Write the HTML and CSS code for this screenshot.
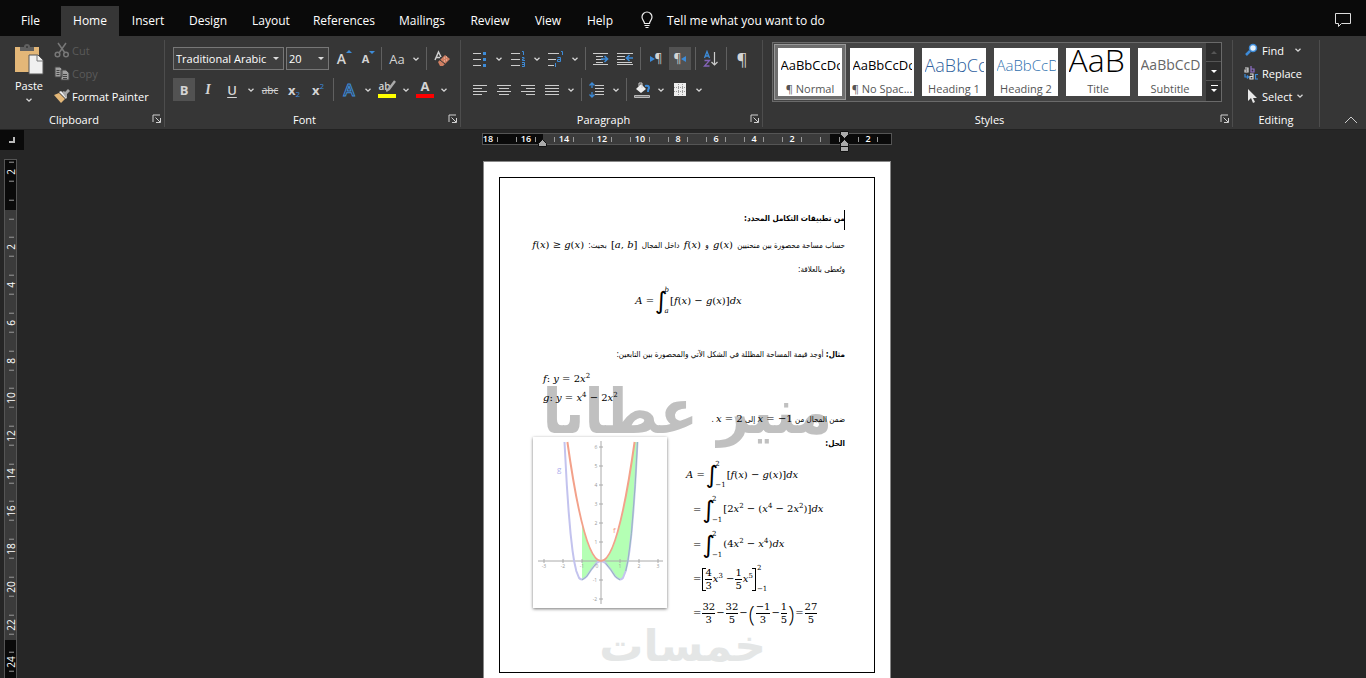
FILE: index.html
```html
<!DOCTYPE html>
<html lang="en">
<head>
  <meta charset="UTF-8" />
  <title>Document</title>
  <link rel="stylesheet" href="styles.css">
</head>
<body>
  <svg class="defs" aria-hidden="true">
    <symbol id="chev" viewBox="0 0 8 8"><path d="M1.5 2.8L4 5.2L6.5 2.8" fill="none" stroke="#d8d8d8" stroke-width="1.3"/></symbol>
    <symbol id="launch" viewBox="0 0 10 10"><path d="M1 8V1H8M3.5 3.5L8 8M8.5 4V8.5H4" fill="none" stroke="#d0d0d0"/></symbol>
  </svg>

  <div class="app">
    <nav class="tabs">
      <button>File</button>
      <button class="active">Home</button>
      <button>Insert</button>
      <button>Design</button>
      <button>Layout</button>
      <button>References</button>
      <button>Mailings</button>
      <button>Review</button>
      <button>View</button>
      <button>Help</button>
      <button class="tell">
        <svg width="14" height="18" viewBox="0 0 14 18"><path d="M4.5 12.5C4.5 10 2 9 2 6a5 5 0 0 1 10 0c0 3-2.500 4-2.500 6.500zM4.500 14.500h5M5.500 16.500h3" fill="none" stroke="#eee" stroke-width="1.200"/></svg>
        Tell me what you want to do
      </button>
      <button class="comment" aria-label="Comments">
        <svg width="18" height="16" viewBox="0 0 18 16"><path d="M1.500 1.500h15v10h-9l-3 3v-3h-3z" fill="none" stroke="#ddd"/></svg>
      </button>
    </nav>

    <header class="ribbon">
      <section class="group">
        <div class="body clipboard">
          <button class="paste">
            <svg width="30" height="32" viewBox="0 0 30 32">
              <path d="M1 4h24v25H1z" fill="#e3b778"/>
              <path d="M6 8V4h4a3 3 0 0 1 6 0h4v4z" fill="#606060"/><circle cx="13" cy="4" r="1" fill="#363636"/>
              <path d="M15 12h9l5 5v14H15z" fill="#f0f0f0" stroke="#555"/><path d="M23 12v6h6" fill="none" stroke="#777"/>
            </svg>
            Paste
            <svg width="8" height="8"><use href="#chev"/></svg>
          </button>
          <div class="stack">
            <button class="off">
              <svg width="16" height="16" viewBox="0 0 16 16"><g fill="none" stroke="#777" stroke-width="1.500"><path d="M4 1l7 10M12 1L5 11"/><circle cx="3.500" cy="12.500" r="2.300"/><circle cx="12" cy="12.500" r="2.300"/></g></svg>
              Cut
            </button>
            <button class="off">
              <svg width="16" height="16" viewBox="0 0 16 16"><path d="M1 2h5l2 2v8H1zM7 5h5l3 3v7H7z" fill="#a0a0a0" stroke="#444"/><path d="M2.500 5.500h3M2.500 7.500h3M2.500 9.500h3M9 9.500h4M9 11.500h4M9 13.500h4" stroke="#444"/></svg>
              Copy
            </button>
            <button>
              <svg width="16" height="16" viewBox="0 0 16 16"><path d="M0 7l5-2 6 6-4 4z" fill="#e3b778"/><path d="M5 4l2-1 6 6-1 2z" fill="#eee"/><path d="M8 4l2-1 1 1 3-3 2 2-3 3v3l-1 1z" fill="#a8a8a8"/></svg>
              Format Painter
            </button>
          </div>
        </div>
        <footer><span>Clipboard</span><button aria-label="Clipboard options"><svg width="10" height="10"><use href="#launch"/></svg></button></footer>
      </section>

      <section class="group">
        <div class="body">
          <div class="row">
            <span class="combo font-name"><select aria-label="Font"><option>Traditional Arabic</option></select></span>
            <span class="combo font-size"><select aria-label="Font size"><option>20</option></select></span>
            <button class="btn grow"><b class="big">A</b><i class="tri up"></i></button>
            <button class="btn grow"><b class="small">A</b><i class="tri down"></i></button>
            <span class="sep"></span>
            <button class="btn case">Aa</button>
            <button class="chev" aria-label="Case options"><svg width="8" height="8"><use href="#chev"/></svg></button>
            <span class="sep"></span>
            <button class="btn" aria-label="Clear formatting">
              <svg width="18" height="18" viewBox="0 0 18 18"><path d="M2 10L5.500 2L8 7M3 7.500h4" fill="none" stroke="#d0d0d0" stroke-width="1.500"/><path d="M5 12l7-7 5 4-7 7-3 0z" fill="#d07f62"/><path d="M7 10l5 4" stroke="#363636"/><path d="M11 8h1M13 7h1M13 10h1M11 11h1" stroke="#f5cdbd"/></svg>
            </button>
          </div>
          <div class="row">
            <button class="btn on"><b>B</b></button>
            <button class="btn italic">I</button>
            <button class="btn underline">U</button>
            <button class="chev" aria-label="Underline options"><svg width="8" height="8"><use href="#chev"/></svg></button>
            <button class="btn strike">abc</button>
            <button class="btn script"><b>x</b><sub>2</sub></button>
            <button class="btn script"><b>x</b><sup>2</sup></button>
            <span class="sep"></span>
            <button class="btn effects">A</button>
            <button class="chev" aria-label="Text effects"><svg width="8" height="8"><use href="#chev"/></svg></button>
            <button class="btn bar yellow"><span>ab</span><svg width="10" height="12" viewBox="0 0 10 12"><path d="M9 1L3 9L0 11" fill="none" stroke="#aaa" stroke-width="2.400"/></svg></button>
            <button class="chev" aria-label="Highlight colours"><svg width="8" height="8"><use href="#chev"/></svg></button>
            <button class="btn bar red"><b>A</b></button>
            <button class="chev" aria-label="Font colours"><svg width="8" height="8"><use href="#chev"/></svg></button>
          </div>
        </div>
        <footer><span>Font</span><button aria-label="Font options"><svg width="10" height="10"><use href="#launch"/></svg></button></footer>
      </section>

      <section class="group">
        <div class="body">
          <div class="row">
            <button class="btn" aria-label="Bullets"><svg width="16" height="16" viewBox="0 0 16 16"><path d="M1 2.500h8M1 8.500h8M1 14.500h8" stroke="#ccc"/><path d="M11 1h3v3h-3zM11 7h3v3h-3zM11 13h3v3h-3z" fill="#3d8bd8"/></svg></button>
            <button class="chev" aria-label="Bullet library"><svg width="8" height="8"><use href="#chev"/></svg></button>
            <button class="btn" aria-label="Numbering"><svg width="16" height="16" viewBox="0 0 16 16"><path d="M1 2.500h9M1 8.500h9M1 14.500h9" stroke="#ccc"/><path d="M12 .500h1.500V4M12 6.500h2v1.500h-1.500v1.500H15M12 11.500h2.500v4H12M12 13.500h2" fill="none" stroke="#3d8bd8"/></svg></button>
            <button class="chev" aria-label="Number library"><svg width="8" height="8"><use href="#chev"/></svg></button>
            <button class="btn" aria-label="Multilevel list"><svg width="18" height="16" viewBox="0 0 18 16"><path d="M1 2.500h11M1 8.500h8M1 14.500h6" stroke="#ccc"/><path d="M14 .500h1.500V4M10.500 6.500h3v4h-3v-2h3M8.500 12v4" fill="none" stroke="#3d8bd8"/></svg></button>
            <button class="chev" aria-label="List library"><svg width="8" height="8"><use href="#chev"/></svg></button>
            <span class="sep"></span>
            <button class="btn" aria-label="Increase indent"><svg width="16" height="14" viewBox="0 0 16 14"><path d="M0 1.500h15M3 4.500h7M3 7.500h7M3 10.500h7M0 12.500h15" stroke="#ccc"/><path d="M8 7h6M11.500 4l3 3-3 3" fill="none" stroke="#3d8bd8" stroke-width="1.600"/></svg></button>
            <button class="btn" aria-label="Decrease indent"><svg width="16" height="14" viewBox="0 0 16 14"><path d="M0 1.500h16M0 4.500h8M0 7.500h8M0 10.500h15M0 12.500h16" stroke="#ccc"/><path d="M10 6h6M12.500 3l-3 3 3 3" fill="none" stroke="#3d8bd8" stroke-width="1.600"/></svg></button>
            <span class="sep"></span>
            <button class="btn pil"><i class="tri right"></i>¶</button>
            <button class="btn pil on">¶<i class="tri left"></i></button>
            <span class="sep"></span>
            <button class="btn" aria-label="Sort"><svg width="16" height="18" viewBox="0 0 16 18"><path d="M1.500 8L4 1.500L6.500 8M2.500 6h3" fill="none" stroke="#3d8bd8" stroke-width="1.300"/><path d="M1.500 10.500h5L1.500 16h5" fill="none" stroke="#8464b8" stroke-width="1.300"/><path d="M11.500 2v13M8.500 12l3 3 3-3" fill="none" stroke="#ccc" stroke-width="1.200"/></svg></button>
            <span class="sep"></span>
            <button class="btn mark">¶</button>
          </div>
          <div class="row">
            <button class="btn" aria-label="Align left"><svg width="14" height="12" viewBox="0 0 14 12"><path d="M0 1.500h14M0 4.500h9M0 7.500h14M0 10.500h9" stroke="#ccc"/></svg></button>
            <button class="btn" aria-label="Center"><svg width="14" height="12" viewBox="0 0 14 12"><path d="M0 1.500h14M2 4.500h10M0 7.500h14M2 10.500h10" stroke="#ccc"/></svg></button>
            <button class="btn" aria-label="Align right"><svg width="14" height="12" viewBox="0 0 14 12"><path d="M0 1.500h14M5 4.500h9M0 7.500h14M5 10.500h9" stroke="#ccc"/></svg></button>
            <button class="btn" aria-label="Justify"><svg width="14" height="12" viewBox="0 0 14 12"><path d="M0 1.500h14M0 4.500h14M0 7.500h14M0 10.500h14" stroke="#ccc"/></svg></button>
            <button class="chev" aria-label="Justify options"><svg width="8" height="8"><use href="#chev"/></svg></button>
            <span class="sep"></span>
            <button class="btn" aria-label="Line spacing"><svg width="16" height="16" viewBox="0 0 16 16"><path d="M6 3.500h9M6 6.500h9M6 9.500h9M6 12.500h9" stroke="#ccc"/><path d="M3 1v5M.500 3.500L3 1l2.500 2.500M3 10v5M.500 12.500L3 15l2.500-2.500" fill="none" stroke="#3d8bd8" stroke-width="1.300"/></svg></button>
            <button class="chev" aria-label="Spacing options"><svg width="8" height="8"><use href="#chev"/></svg></button>
            <span class="sep"></span>
            <button class="btn" aria-label="Shading"><svg width="18" height="18" viewBox="0 0 18 18"><path d="M3 8l5-5 5 5-5 4z" fill="#eee"/><path d="M6 5V2h3v5" fill="none" stroke="#ccc"/><path d="M12 5q4-1 4 2-1 1-1 4" fill="none" stroke="#3d8bd8" stroke-width="2"/><path d="M1.500 14.500h15v2h-15z" fill="#777" stroke="#bbb"/></svg></button>
            <button class="chev" aria-label="Shading colours"><svg width="8" height="8"><use href="#chev"/></svg></button>
            <button class="btn" aria-label="Borders"><svg width="14" height="14" viewBox="0 0 14 14"><path d="M1 0h12v13H1z" fill="#eee"/><path d="M1 4.500h12M1 8.500h12M5.500 1v11M9.500 1v11" stroke="#999" stroke-dasharray="1 1"/></svg></button>
            <button class="chev" aria-label="Border options"><svg width="8" height="8"><use href="#chev"/></svg></button>
          </div>
        </div>
        <footer><span>Paragraph</span><button aria-label="Paragraph options"><svg width="10" height="10"><use href="#launch"/></svg></button></footer>
      </section>

      <section class="group">
        <div class="body">
          <div class="gallery">
            <button class="style selected"><span class="sample">AaBbCcDc</span><span>¶ Normal</span></button>
            <button class="style"><span class="sample">AaBbCcDc</span><span>¶ No Spac...</span></button>
            <button class="style"><span class="sample h1">AaBbCc</span><span>Heading 1</span></button>
            <button class="style"><span class="sample h2">AaBbCcD</span><span>Heading 2</span></button>
            <button class="style"><span class="sample title">AaB</span><span>Title</span></button>
            <button class="style"><span class="sample subtitle">AaBbCcD</span><span>Subtitle</span></button>
            <div class="scroll">
              <button aria-label="Previous styles"><i class="tri up dim"></i></button>
              <button aria-label="Next styles"><i class="tri down white"></i></button>
              <button class="more" aria-label="All styles"><i class="tri down white"></i></button>
            </div>
          </div>
        </div>
        <footer><span>Styles</span><button aria-label="Style options"><svg width="10" height="10"><use href="#launch"/></svg></button></footer>
      </section>

      <section class="group">
        <div class="body stack editing">
          <button>
            <svg width="14" height="14" viewBox="0 0 14 14"><circle cx="9" cy="5" r="3.500" fill="#e8f2fb" stroke="#3d8bd8" stroke-width="1.500"/><path d="M6 8l-4 4" stroke="#3d8bd8" stroke-width="2.500"/></svg>
            Find <svg class="far" width="8" height="8"><use href="#chev"/></svg>
          </button>
          <button>
            <svg width="14" height="14" viewBox="0 0 14 14"><g fill="none" stroke-width="1.200"><path d="M1 2h3v4H1V4h3" stroke="#ddd"/><path d="M7 0v6h3V3H7" stroke="#9070c8"/><path d="M1 8v3h3M3 9.500L4.500 11 3 12.500" stroke="#3d8bd8"/><path d="M6 8h3v5H6v-2.500h3" stroke="#ddd"/><path d="M14 8.500h-2.500V13H14" stroke="#3d8bd8"/></g></svg>
            Replace
          </button>
          <button>
            <svg width="14" height="14" viewBox="0 0 14 14"><path d="M4 0v12l3-3 2 5 2-1-2-4h4z" fill="#e8e8e8"/></svg>
            Select <svg width="8" height="8"><use href="#chev"/></svg>
          </button>
        </div>
        <footer><span>Editing</span></footer>
      </section>

      <button class="collapse" aria-label="Collapse the ribbon"><svg width="14" height="8" viewBox="0 0 14 8"><path d="M1 7l6-6 6 6" fill="none" stroke="#ccc"/></svg></button>
    </header>

    <main class="workspace">
      <aside>
        <button class="tabstop" aria-label="Tab stop"><svg width="6" height="6" viewBox="0 0 6 6"><path d="M0 5h6M5 0v6" stroke="#bbb" stroke-width="2"/></svg></button>
        <div class="vruler">
          <ol>
            <li>2</li><li></li><li>2</li><li>4</li><li>6</li><li>8</li><li>10</li><li>12</li><li>14</li><li>16</li><li>18</li><li>20</li><li>22</li><li>24</li>
          </ol>
        </div>
      </aside>

      <div class="canvas">
        <div class="hruler">
          <ol>
            <li>18</li><li>16</li><li>14</li><li>12</li><li>10</li><li>8</li><li>6</li><li>4</li><li>2</li><li></li><li>2</li>
          </ol>
          <svg class="indent left" width="9" height="8" viewBox="0 0 9 8"><path d="M.500 7.500v-3l4-4 4 4v3z" fill="#aaa" stroke="#111"/></svg>
          <svg class="indent right" width="9" height="22" viewBox="0 0 9 22"><path d="M.500.500h8v3l-4 4-4-4zM.500 15.500v-3l4-4 4 4v3zM.500 15.500h8v5h-8z" fill="#aaa" stroke="#111"/></svg>
        </div>

        <article class="page">
          <div class="frame">
            <div class="name-mark" lang="ar" dir="rtl">منير عطايا</div>

            <div class="text" lang="ar" dir="rtl">
              <h1><span class="cursor"></span>من تطبيقات التكامل المحدد:</h1>
              <p class="intro">حساب مساحة محصورة بين منحنيين <bdi class="m" dir="ltr"><i>g</i>(<i>x</i>)</bdi> و <bdi class="m" dir="ltr"><i>f</i>(<i>x</i>)</bdi> داخل المجال <bdi class="m" dir="ltr">[<i>a</i>, <i>b</i>]</bdi> بحيث: <bdi class="m" dir="ltr"><i>f</i>(<i>x</i>) ≥ <i>g</i>(<i>x</i>)</bdi></p>
              <p>وتُعطى بالعلاقة:</p>
              <div class="m eq center" dir="ltr"><span><i>A</i> =</span><span class="int">∫</span><span class="lim"><i>b</i><i>a</i></span><span>[<i>f</i>(<i>x</i>) − <i>g</i>(<i>x</i>)]<i>dx</i></span></div>
              <p class="example"><b>مثال:</b> أوجد قيمة المساحة المظللة في الشكل الآتي والمحصورة بين التابعين:</p>
              <div class="m func" dir="ltr"><i>f</i>: <i>y</i> = 2<i>x</i><sup>2</sup></div>
              <div class="m func" dir="ltr"><i>g</i>: <i>y</i> = <i>x</i><sup>4</sup> − 2<i>x</i><sup>2</sup></div>
              <p class="range">ضمن المجال من <bdi class="m" dir="ltr"><i>x</i> = −1</bdi> إلى <bdi class="m" dir="ltr"><i>x</i> = 2</bdi> .</p>
            </div>

            <div class="solution">
              <figure>
                <svg viewBox="0 0 134 171" role="img" aria-label="Area between f and g">
                  <path d="M49 86Q58.500 124 68 124Q84.800 124 101.600 5H104.500L102.200 47.700 100.300 75.100 98.400 96.800 96.500 113.300 94.900 124 92.700 134 89.900 141 87 143 82.200 139.400 77.500 132.300 72.700 126.300 68 124 63.300 126.300 58.500 132.300 53.700 139.400 49 143z" fill="#b4ffb4"/>
                  <path d="M5 124H130M68 4V167" stroke="#aaa"/>
                  <path d="M11 122v4M30 122v4M49 122v4M87 122v4M106 122v4M125 122v4M66 10h4M66 29h4M66 48h4M66 67h4M66 86h4M66 105h4M66 143h4M66 162h4" stroke="#aaa"/>
                  <path d="M31.500 5L33.800 47.700 35.700 75.100 37.600 96.800 39.500 113.300 41.100 124 43.300 134 46.100 141Q49 144.500 53.700 139.400L58.500 132.300 63.300 126.300Q68 122 72.700 126.300L77.500 132.300 82.200 139.400Q87 144.500 89.900 141L92.700 134 94.900 124 96.500 113.300 98.400 96.800 100.300 75.100 102.200 47.700 104.500 5" fill="none" stroke="#c3c3ee" stroke-width="2"/>
                  <path d="M49 143L53.700 139.400 58.500 132.300 63.300 126.300M87 143L82.200 139.400 77.500 132.300 72.700 126.300M92.700 134L94.900 124 98.400 96.800 102.200 47.700 104.500 5" fill="none" stroke="#94b8bc"/>
                  <path d="M34.400 5Q68 243 101.600 5" fill="none" stroke="#f3a18a" stroke-width="2"/>
                  <g class="axis">
                    <text x="11" y="131">-3</text><text x="30" y="131">-2</text><text x="49" y="131">-1</text><text x="64" y="131">0</text><text x="87" y="131">1</text><text x="106" y="131">2</text><text x="125" y="131">3</text>
                    <text x="63" y="12">6</text><text x="63" y="31">5</text><text x="63" y="50">4</text><text x="63" y="69">3</text><text x="63" y="88">2</text><text x="63" y="107">1</text><text x="62" y="145">-1</text><text x="62" y="164">-2</text>
                  </g>
                  <text class="gname" x="24" y="35">g</text><text class="fname" x="80" y="96">f</text>
                </svg>
              </figure>
              <div class="steps">
                <p class="text" lang="ar" dir="rtl"><b>الحل:</b></p>
                <div class="m eq first"><span><i>A</i> =</span><span class="int">∫</span><span class="lim"><span>2</span><span>−1</span></span><span>[<i>f</i>(<i>x</i>) − <i>g</i>(<i>x</i>)]<i>dx</i></span></div>
                <div class="m eq"><span>=</span><span class="int">∫</span><span class="lim"><span>2</span><span>−1</span></span><span>[2<i>x</i><sup>2</sup> − (<i>x</i><sup>4</sup> − 2<i>x</i><sup>2</sup>)]<i>dx</i></span></div>
                <div class="m eq"><span>=</span><span class="int">∫</span><span class="lim"><span>2</span><span>−1</span></span><span>(4<i>x</i><sup>2</sup> − <i>x</i><sup>4</sup>)<i>dx</i></span></div>
                <div class="m eq fractions"><span>=</span><span class="bracket"><span class="frac"><span>4</span><span>3</span></span><span><i>x</i><sup>3</sup> −</span><span class="frac"><span>1</span><span>5</span></span><span><i>x</i><sup>5</sup></span></span><span class="lim tight"><span>2</span><span>−1</span></span></div>
                <div class="m eq fractions"><span>=</span><span class="frac"><span>32</span><span>3</span></span><span>−</span><span class="frac"><span>32</span><span>5</span></span><span>−</span><span class="paren">(</span><span class="frac"><span>−1</span><span>3</span></span><span>−</span><span class="frac"><span>1</span><span>5</span></span><span class="paren">)</span><span>=</span><span class="frac"><span>27</span><span>5</span></span></div>
              </div>
            </div>

            <div class="site-mark" lang="ar" dir="rtl">خمسات</div>
          </div>
        </article>
      </div>
    </main>
  </div>
</body>
</html>
```
FILE: styles.css
```css
* {
  box-sizing: border-box;
}
body {
  margin: 0;
  background: #262626;
  color: #fff;
  font: 11px "Open Sans", "Noto Sans", sans-serif;
}
button {
  display: flex;
  align-items: center;
  justify-content: center;
  padding: 0;
  border: 0;
  background: none;
  color: inherit;
  font: inherit;
  white-space: nowrap;
}
svg {
  flex: none;
}
ol {
  list-style: none;
  margin: 0;
  padding: 0;
}
p, h1, figure {
  margin: 0;
}
.defs {
  position: absolute;
  width: 0;
  height: 0;
}
.app {
  display: flex;
  flex-direction: column;
  height: 100vh;
  overflow: hidden;
}

/* tabs */
.tabs {
  display: grid;
  grid-template-columns: 61px 58px 58px 62px 64px 82px 74px 62px 54px 50px 1fr 46px;
  flex: none;
  height: 36px;
  padding-top: 6px;
  background: #0a0a0a;
  font-size: 12px;
}
.tabs button {
  padding-bottom: 2px;
}
.tabs .active {
  background: #363636;
}
.tabs .tell {
  justify-content: flex-start;
  gap: 13px;
  padding-left: 15px;
}

/* ribbon */
.ribbon {
  display: grid;
  grid-template-columns: 165px 296px 302px 470px 87px 1fr;
  flex: none;
  height: 94px;
  padding: 4px 0 2px;
  background: #363636;
  border-bottom: 1px solid #222;
}
.group {
  display: flex;
  flex-direction: column;
  border-right: 1px solid #4d4d4d;
}
.body {
  flex: 1;
  padding: 7px 0 0 8px;
}
.group footer {
  display: flex;
  align-items: center;
  height: 16px;
}
.group footer span {
  flex: 1;
  text-align: center;
}
.group footer button {
  width: 16px;
  padding-right: 2px;
  justify-content: flex-end;
}
.clipboard {
  display: flex;
  gap: 5px;
  padding: 0 0 0 9px;
}
.paste {
  flex-direction: column;
  justify-content: flex-start;
  gap: 3px;
  width: 40px;
  padding-top: 3px;
}
.stack {
  display: flex;
  flex-direction: column;
  gap: 7px;
  padding-top: 2px;
}
.stack button {
  justify-content: flex-start;
  gap: 2px;
  height: 16px;
}
.stack .off {
  color: #5a5a5a;
}
.editing {
  padding-left: 11px;
}
.editing button {
  gap: 4px;
}
.editing .far {
  margin-left: 6px;
}
.row {
  display: flex;
  gap: 2px;
  height: 23px;
  margin-bottom: 8px;
}
.combo {
  position: relative;
}
.combo::after {
  content: "";
  position: absolute;
  right: 5px;
  top: 10px;
  border: 3px solid transparent;
  border-top-color: #ddd;
}
.combo select {
  appearance: none;
  width: 100%;
  height: 23px;
  padding: 0 2px;
  border: 1px solid #777;
  border-radius: 0;
  background: #3f3f3f;
  color: #fff;
  font: inherit;
}
.font-name {
  width: 111px;
}
.font-size {
  width: 43px;
}
.btn {
  width: 22px;
  height: 23px;
  color: #d4d4d4;
  font-size: 13px;
}
.btn.on {
  background: #525252;
}
.chev {
  width: 12px;
}
.sep {
  width: 5px;
  border-left: 1px solid #606060;
  margin-left: 2px;
  margin-right: -2px;
}
.grow {
  padding-left: 5px;
}
.big {
  font-size: 14px;
  font-weight: 600;
}
.small {
  font-size: 11px;
}
.tri {
  border: 3px solid transparent;
}
.tri.up {
  align-self: flex-start;
  border-bottom-color: #3d8bd8;
}
.tri.down {
  align-self: flex-start;
  margin-top: 4px;
  border-top-color: #3d8bd8;
}
.tri.right {
  border-left-color: #3d8bd8;
  border-left-width: 5px;
  border-right: 0;
}
.tri.left {
  border-right-color: #3d8bd8;
  border-right-width: 5px;
  border-left: 0;
}
.italic {
  font: italic bold 14px "Liberation Serif", serif;
}
.underline {
  font-weight: 600;
  text-decoration: underline;
  text-underline-offset: 2px;
}
.strike {
  font-size: 10px;
  text-decoration: line-through;
}
.script sub, .script sup {
  color: #3d8bd8;
  font-size: 8px;
  line-height: 8px;
}
.script sub {
  padding-top: 8px;
}
.script sup {
  padding-bottom: 8px;
}
.effects {
  color: #363636;
  font-size: 17px;
  font-weight: 600;
  -webkit-text-stroke: 1px #3d8bd8;
}
.bar {
  width: 18px;
  height: 20px;
  margin: 0 2px;
  border-bottom: 4px solid;
  line-height: 16px;
}
.bar.yellow {
  border-color: #ff0;
  font-size: 10px;
  font-weight: 600;
}
.bar.yellow svg {
  margin-left: -5px;
}
.bar.red {
  border-color: #f00;
}
.pil {
  font-size: 12px;
}
.mark {
  font-size: 17px;
}

/* style gallery */
.gallery {
  display: flex;
  width: 450px;
  height: 60px;
  margin: -5px 0 0 1px;
  padding: 1px 0 1px 1px;
  border: 1px solid #6a6a6a;
  background: #444;
}
.style {
  flex-direction: column;
  justify-content: flex-end;
  width: 72px;
  height: 56px;
  border: 4px solid #444;
  background: #fff;
  color: #555;
  line-height: 14px;
  overflow: hidden;
}
.style.selected {
  border-color: #6e6e6e;
  outline: 1px solid #999;
  outline-offset: -1px;
}
.sample {
  width: 59px;
  height: 32px;
  overflow: hidden;
  color: #000;
  font-size: 13px;
  line-height: 30px;
  text-align: left;
}
.sample.h1 {
  color: #2f5f9e;
  font-size: 18px;
  font-weight: 300;
}
.sample.h2 {
  color: #2f6fae;
  font-size: 15px;
  font-weight: 300;
}
.sample.title {
  font-size: 32px;
  font-weight: 300;
  line-height: 20px;
}
.sample.subtitle {
  color: #666;
  font-size: 14px;
}
.scroll {
  display: grid;
  flex: 1;
  margin: -1px 0;
  background: #2c2c2c;
}
.scroll button + button {
  border-top: 1px solid #555;
}
.scroll .tri {
  align-self: center;
  margin: 0;
}
.scroll .white {
  border-top-color: #fff;
  border-bottom-width: 0;
}
.scroll .dim {
  border-bottom-color: #555;
  border-top-width: 0;
}
.more .tri {
  padding-top: 2px;
  position: relative;
}
.more .tri::before {
  content: "";
  position: absolute;
  left: -3px;
  top: -7px;
  width: 7px;
  height: 1px;
  background: #fff;
}
.collapse {
  align-self: end;
  justify-self: end;
  height: 14px;
  margin-right: 8px;
}

/* rulers */
.workspace {
  display: grid;
  grid-template-columns: 24px 1fr 16px;
  flex: 1;
  min-height: 0;
}
.tabstop {
  width: 24px;
  height: 20px;
  margin-bottom: 9px;
  background: #0a0a0a;
}
.vruler {
  width: 13px;
  height: 540px;
  margin-left: 4px;
  border: 1px solid #555;
  background: linear-gradient(#0a0a0a 50px, #3b3b3b 50px, #3b3b3b 480px, #0a0a0a 480px);
}
.vruler ol {
  display: grid;
  grid-template-rows: repeat(14, 1fr);
  height: 528px;
  margin-top: -7px;
  margin-left: 1px;
}
.vruler li {
  display: flex;
  align-items: center;
  justify-content: space-between;
  padding: 9px 0;
  writing-mode: vertical-rl;
  transform: rotate(180deg);
  font-size: 10px;
  line-height: 11px;
}
.vruler li::before, .vruler li::after {
  content: "";
  width: 5px;
  height: 1px;
  background: #999;
}
.hruler li::before, .hruler li::after {
  content: "";
  width: 1px;
  height: 5px;
  background: #999;
}
.canvas {
  display: flex;
  flex-direction: column;
  align-items: center;
}
.hruler {
  position: relative;
  width: 410px;
  height: 12px;
  margin: 3px 0 16px;
  border: 1px solid #555;
  background: linear-gradient(90deg, #0a0a0a 60px, #3b3b3b 60px, #3b3b3b 347px, #0a0a0a 347px);
}
.hruler ol {
  display: grid;
  grid-template-columns: repeat(11, 38px);
  justify-content: end;
  padding-right: 4px;
}
.hruler li {
  display: flex;
  align-items: center;
  justify-content: space-between;
  height: 10px;
  padding: 0 9px;
  font-size: 9px;
  font-weight: 600;
  line-height: 10px;
}
.hruler li:first-child::before {
  background: none;
}
.indent {
  position: absolute;
}
.indent.left {
  left: 55px;
  top: 5px;
}
.indent.right {
  right: 42px;
  top: -3px;
}

/* page */
.page {
  width: 408px;
  height: 530px;
  flex: none;
  padding: 15px;
  border: 1px solid #888;
  background: #fff;
  color: #000;
}
.frame {
  position: relative;
  height: 496px;
  padding: 28px 29px 0 32px;
  border: 1px solid #000;
}
.text {
  position: relative;
  font-family: "DejaVu Sans Condensed", "DejaVu Sans", sans-serif;
  font-size: 8px;
  line-height: 25px;
}
.text h1 {
  font-size: 8px;
  line-height: 26px;
}
.text p {
  height: 25px;
  white-space: nowrap;
}
.intro bdi {
  margin: 0 2px;
}
.intro bdi:last-child {
  margin-left: 0;
}
.cursor {
  position: absolute;
  right: 0;
  top: 4px;
  width: 1px;
  height: 20px;
  background: #000;
}
.m {
  font-family: "DejaVu Serif", serif;
  font-size: 10px;
}
.m sup {
  font-size: 7px;
  line-height: 7px;
}
.eq {
  display: flex;
  align-items: center;
  gap: 1px;
  height: 35px;
  padding-left: 7px;
  line-height: 12px;
  white-space: nowrap;
}
.eq.first {
  padding-left: 0;
}
.eq.center {
  justify-content: center;
  height: 38px;
  padding: 0;
}
.eq.fractions {
  height: 34px;
}
.int {
  font: 24px/28px "DejaVu Sans", sans-serif;
}
.lim {
  display: flex;
  flex-direction: column;
  justify-content: space-between;
  height: 30px;
  margin-left: -4px;
  font-size: 7px;
  line-height: 9px;
}
.lim.tight {
  margin-left: 0;
}
.frac {
  display: flex;
  flex-direction: column;
  text-align: center;
  line-height: 12px;
}
.frac span:first-child {
  border-bottom: 1px solid #000;
}
.bracket {
  display: flex;
  align-items: center;
  gap: 1px;
  position: relative;
  padding: 0 3px;
}
.bracket::before, .bracket::after {
  content: "";
  position: absolute;
  top: 1px;
  bottom: 1px;
  width: 3px;
  border: 1px solid #000;
}
.bracket::before {
  left: 0;
  border-right: 0;
}
.bracket::after {
  right: 0;
  border-left: 0;
}
.paren {
  font: 300 22px/24px "Open Sans", sans-serif;
}
.text .example {
  height: 27px;
  margin-top: 22px;
}
.text .range {
  height: 23px;
  line-height: 23px;
}
.func {
  height: 19px;
  padding-left: 11px;
  line-height: 19px;
}
.solution {
  display: flex;
  gap: 19px;
  position: relative;
  padding-left: 1px;
}
.solution figure {
  width: 134px;
  height: 171px;
  margin-top: 7px;
  background: #fff;
  box-shadow: 0 1px 3px #777;
}
.steps {
  flex: 1;
}
.steps p {
  height: 27px;
  line-height: 27px;
}
.axis text {
  fill: #999;
  font-size: 5px;
  text-anchor: middle;
}
.gname {
  fill: #b0b0ee;
  font-size: 8px;
}
.fname {
  fill: #f3a18a;
  font-size: 8px;
}
.name-mark {
  position: absolute;
  right: 42px;
  top: 184px;
  color: #c0c0c0;
  font: bold 62px/100px "DejaVu Sans Condensed", "DejaVu Sans", sans-serif;
  white-space: nowrap;
}
.site-mark {
  position: absolute;
  right: 108px;
  bottom: 2px;
  color: #e4e6e6;
  font: bold 44px/48px "DejaVu Sans", sans-serif;
}
```
